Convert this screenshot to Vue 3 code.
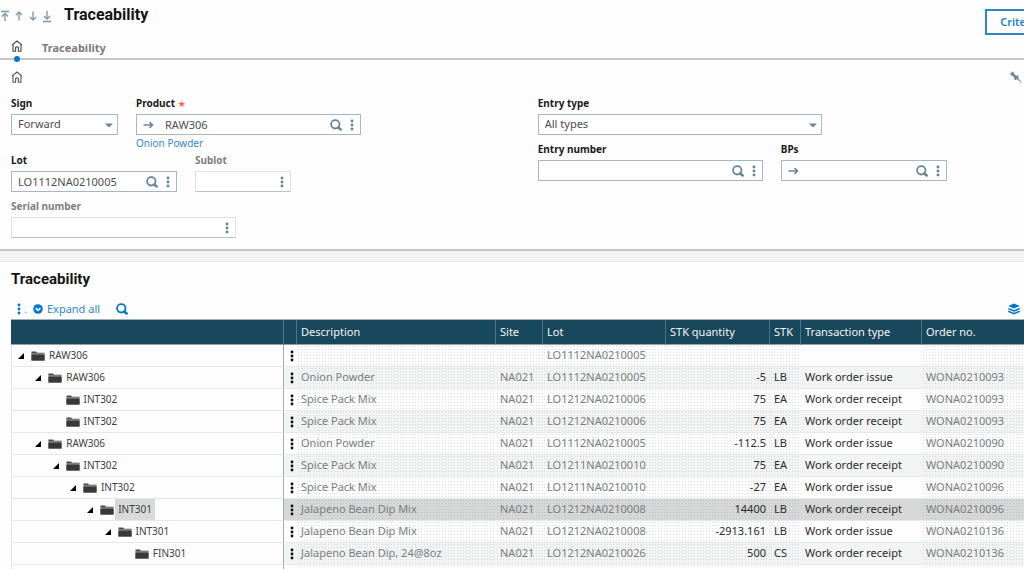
<script setup>
import { ref } from 'vue'

const sign = ref('Forward')
const entryType = ref('All types')
const product = ref('RAW306')
const lot = ref('LO1112NA0210005')

const navPaths = [
  { label: 'First', d: 'M1 1.5h8M5 11V3.5M2 6.5l3-3 3 3' },
  { label: 'Previous', d: 'M5 10.500V2M2 5l3-3 3 3' },
  { label: 'Next', d: 'M5 1.500V10M2 7l3 3 3-3' },
  { label: 'Last', d: 'M1 11.500h8M5 1V9M2 6l3 3 3-3' },
]

const rows = [
  { level: 0, open: true, name: 'RAW306', lot: 'LO1112NA0210005' },
  { level: 1, open: true, name: 'RAW306', desc: 'Onion Powder', site: 'NA021', lot: 'LO1112NA0210005', qty: '-5', unit: 'LB', type: 'Work order issue', order: 'WONA0210093' },
  { level: 2, name: 'INT302', desc: 'Spice Pack Mix', site: 'NA021', lot: 'LO1212NA0210006', qty: '75', unit: 'EA', type: 'Work order receipt', order: 'WONA0210093' },
  { level: 2, name: 'INT302', desc: 'Spice Pack Mix', site: 'NA021', lot: 'LO1212NA0210006', qty: '75', unit: 'EA', type: 'Work order receipt', order: 'WONA0210093' },
  { level: 1, open: true, name: 'RAW306', desc: 'Onion Powder', site: 'NA021', lot: 'LO1112NA0210005', qty: '-112.5', unit: 'LB', type: 'Work order issue', order: 'WONA0210090' },
  { level: 2, open: true, name: 'INT302', desc: 'Spice Pack Mix', site: 'NA021', lot: 'LO1211NA0210010', qty: '75', unit: 'EA', type: 'Work order receipt', order: 'WONA0210090' },
  { level: 3, open: true, name: 'INT302', desc: 'Spice Pack Mix', site: 'NA021', lot: 'LO1211NA0210010', qty: '-27', unit: 'EA', type: 'Work order issue', order: 'WONA0210096' },
  { level: 4, open: true, name: 'INT301', desc: 'Jalapeno Bean Dip Mix', site: 'NA021', lot: 'LO1212NA0210008', qty: '14400', unit: 'LB', type: 'Work order receipt', order: 'WONA0210096', selected: true },
  { level: 5, open: true, name: 'INT301', desc: 'Jalapeno Bean Dip Mix', site: 'NA021', lot: 'LO1212NA0210008', qty: '-2913.161', unit: 'LB', type: 'Work order issue', order: 'WONA0210136' },
  { level: 6, name: 'FIN301', desc: 'Jalapeno Bean Dip, 24@8oz', site: 'NA021', lot: 'LO1212NA0210026', qty: '500', unit: 'CS', type: 'Work order receipt', order: 'WONA0210136' },
  { level: 0, name: '' },
]
</script>

<template>
  <div class="page">
    <svg class="defs" width="0" height="0" aria-hidden="true">
      <symbol id="search" viewBox="0 0 12 12">
        <circle cx="5.300" cy="5.300" r="4.200" fill="none" stroke="currentColor" stroke-width="1.800" />
        <path d="M8.200 8.500l2.500 2" stroke="currentColor" stroke-width="2.400" stroke-linecap="round" />
      </symbol>
      <symbol id="dots" viewBox="0 0 4 12">
        <circle cx="2" cy="2" r="1.450" fill="currentColor" />
        <circle cx="2" cy="6" r="1.450" fill="currentColor" />
        <circle cx="2" cy="10" r="1.450" fill="currentColor" />
      </symbol>
      <symbol id="jump" viewBox="0 0 12 10">
        <path d="M.5 5h9M6.500 2l3 3-3 3" fill="none" stroke="currentColor" stroke-width="1.600" />
      </symbol>
      <symbol id="home" viewBox="0 0 12 12">
        <path d="M1 5.200L6 1l5 4.200M2 4.500V11.300h2.600V7.500Q6 6 7.400 7.500V11.300H10V4.500" fill="none" stroke="currentColor" stroke-width="1.100" stroke-linejoin="round" />
      </symbol>
      <symbol id="folder" viewBox="0 0 14 10">
        <path d="M0.500 0.500h4.500l1 1.200h7.500V9.500H0.500z" fill="#4a4a4a" />
        <path d="M1 2.900h12.500" stroke="#a9a9a9" stroke-width="0.900" />
        <path d="M0.500 4h13v5.500h-13z" fill="#383838" />
      </symbol>
    </svg>

    <header class="top">
      <nav class="record-nav" aria-label="Records">
        <button v-for="n in navPaths" :key="n.label" type="button" :aria-label="n.label">
          <svg width="10" height="13" viewBox="0 0 10 13"><path :d="n.d" fill="none" stroke="currentColor" stroke-width="1.300" /></svg>
        </button>
      </nav>
      <h1>Traceability</h1>
      <button type="button" class="criteria">Crite</button>
    </header>

    <nav class="tabs" aria-label="Sections">
      <a href="#" class="tab-home" aria-label="Home"><svg width="12" height="12"><use href="#home" /></svg></a>
      <a href="#list" class="tab">Traceability</a>
    </nav>

    <section class="panel">
      <div class="panel-tools">
        <a href="#" aria-label="Home" class="home"><svg width="12" height="12"><use href="#home" /></svg></a>
        <button type="button" class="pin" aria-label="Pin">
          <svg width="13" height="12" viewBox="0 0 13 12"><path d="M1 3L3.600.6 5 1.900 4.900 2.800 7.400 4.700 9.400 4.400 9.700 6 9 6.900 12.500 11.300 12 11.600 7.800 8 7 8.900 5.400 8.700 5.300 6.800 3.200 4.600 2.200 4.500z" fill="currentColor" /></svg>
        </button>
      </div>

      <div class="form">
        <div class="column">
          <div class="line">
            <div class="field w-sign">
              <label for="sign">Sign</label>
              <div class="box">
                <select id="sign" v-model="sign"><option>Forward</option></select>
                <svg class="caret" width="8" height="5" viewBox="0 0 8 5"><path d="M0 .5h8L4 4.500z" fill="currentColor" /></svg>
              </div>
            </div>
            <div class="field w-long">
              <label for="product">Product <span class="star">★</span></label>
              <div class="box">
                <button type="button" class="jump" aria-label="Open product"><svg width="12" height="10"><use href="#jump" /></svg></button>
                <input id="product" v-model="product" type="text" />
                <button type="button" aria-label="Search product"><svg width="12" height="12"><use href="#search" /></svg></button>
                <button type="button" class="more" aria-label="Product actions"><svg width="4" height="12"><use href="#dots" /></svg></button>
              </div>
              <a href="#product" class="hint">Onion Powder</a>
            </div>
          </div>
          <div class="line">
            <div class="field w-mid">
              <label for="lot">Lot</label>
              <div class="box">
                <input id="lot" v-model="lot" type="text" />
                <button type="button" aria-label="Search lot"><svg width="12" height="12"><use href="#search" /></svg></button>
                <button type="button" class="more" aria-label="Lot actions"><svg width="4" height="12"><use href="#dots" /></svg></button>
              </div>
            </div>
            <div class="field w-short off">
              <label for="sublot">Sublot</label>
              <div class="box">
                <input id="sublot" type="text" readonly />
                <button type="button" class="more" aria-label="Sublot actions"><svg width="4" height="12"><use href="#dots" /></svg></button>
              </div>
            </div>
          </div>
          <div class="line">
            <div class="field w-long off">
              <label for="serial">Serial number</label>
              <div class="box">
                <input id="serial" type="text" readonly />
                <button type="button" class="more" aria-label="Serial number actions"><svg width="4" height="12"><use href="#dots" /></svg></button>
              </div>
            </div>
          </div>
        </div>

        <div class="column">
          <div class="line">
            <div class="field w-wide">
              <label for="entry-type">Entry type</label>
              <div class="box">
                <select id="entry-type" v-model="entryType"><option>All types</option></select>
                <svg class="caret" width="8" height="5" viewBox="0 0 8 5"><path d="M0 .5h8L4 4.500z" fill="currentColor" /></svg>
              </div>
            </div>
          </div>
          <div class="line">
            <div class="field w-long">
              <label for="entry-number">Entry number</label>
              <div class="box">
                <input id="entry-number" type="text" />
                <button type="button" aria-label="Search entry number"><svg width="12" height="12"><use href="#search" /></svg></button>
                <button type="button" class="more" aria-label="Entry number actions"><svg width="4" height="12"><use href="#dots" /></svg></button>
              </div>
            </div>
            <div class="field w-mid">
              <label for="bps">BPs</label>
              <div class="box">
                <button type="button" class="jump" aria-label="Open BP"><svg width="12" height="10"><use href="#jump" /></svg></button>
                <input id="bps" type="text" />
                <button type="button" aria-label="Search BP"><svg width="12" height="12"><use href="#search" /></svg></button>
                <button type="button" class="more" aria-label="BP actions"><svg width="4" height="12"><use href="#dots" /></svg></button>
              </div>
            </div>
          </div>
        </div>
      </div>
    </section>

    <section id="list" class="list">
      <h2>Traceability</h2>
      <div class="list-tools">
        <button type="button" aria-label="List actions"><svg width="4" height="12"><use href="#dots" /></svg></button>
        <span class="stop">.</span>
        <button type="button" class="expand">
          <svg width="10" height="10" viewBox="0 0 10 10"><circle cx="5" cy="5" r="4.800" fill="#0077c8" /><path d="M2.600 4L5 6.400 7.400 4" fill="none" stroke="#fff" stroke-width="1.600" /></svg>
          Expand all
        </button>
        <button type="button" class="find" aria-label="Search list"><svg width="12" height="12"><use href="#search" /></svg></button>
        <button type="button" class="layers" aria-label="Layers">
          <svg width="12" height="12" viewBox="0 0 12 12"><path d="M6 .5L11.800 3 6 5.600.2 3z" fill="currentColor" /><path d="M.3 5.600L6 8l5.700-2.400M.3 8.200L6 10.600 11.700 8.200" fill="none" stroke="currentColor" stroke-width="1.500" /></svg>
        </button>
      </div>

      <table>
        <colgroup>
          <col class="c-tree" /><col class="c-menu" /><col class="c-desc" /><col class="c-site" /><col class="c-lot" />
          <col class="c-qty" /><col class="c-unit" /><col class="c-type" /><col />
        </colgroup>
        <thead>
          <tr>
            <th aria-label="Item"></th>
            <th aria-label="Actions"></th>
            <th>Description</th>
            <th>Site</th>
            <th>Lot</th>
            <th>STK quantity</th>
            <th>STK</th>
            <th>Transaction type</th>
            <th>Order no.</th>
          </tr>
        </thead>
        <tbody>
          <tr v-for="(r, i) in rows" :key="i" :class="{ alt: i % 2 === 1, selected: r.selected }">
            <td class="tree">
              <div v-if="r.name" class="node" :style="{ paddingLeft: r.level * 173 / 10 + 'px' }">
                <span class="toggle"><svg v-if="r.open" width="6" height="6" viewBox="0 0 6 6"><path d="M6 0V6H0z" fill="#000" /></svg></span>
                <svg width="14" height="10"><use href="#folder" /></svg>
                <span class="name">{{ r.name }}</span>
              </div>
            </td>
            <td class="menu"><button type="button" aria-label="Row actions"><svg width="4" height="12"><use href="#dots" /></svg></button></td>
            <td class="mesh soft">{{ r.desc }}</td>
            <td class="mesh soft">{{ r.site }}</td>
            <td class="mesh soft">{{ r.lot }}</td>
            <td class="mesh num">{{ r.qty }}</td>
            <td class="mesh">{{ r.unit }}</td>
            <td>{{ r.type }}</td>
            <td class="mesh soft">{{ r.order }}</td>
          </tr>
        </tbody>
      </table>
    </section>
  </div>
</template>

<style>
body {
  background: #f2f4f4;
}
</style>

<style scoped>
.page {
  height: 100vh;
  overflow: hidden;
  display: flex;
  flex-direction: column;
  background: #f2f4f4;
  color: #1c1c1c;
  font: 11px/16px "Noto Sans", sans-serif;
}
.defs {
  position: absolute;
}
button {
  display: flex;
  align-items: center;
  padding: 0;
  border: 0;
  background: none;
  font: inherit;
  color: inherit;
}
a {
  text-decoration: none;
  color: inherit;
}
h1,
h2 {
  margin: 0;
  font-family: Roboto, sans-serif;
  font-weight: 700;
  color: #151515;
}
.top {
  flex: none;
  display: flex;
  align-items: flex-start;
  height: 37px;
  background: #fdfdfd;
}
.record-nav {
  display: flex;
  gap: 4px;
  padding-top: 10px;
  color: #7b98a8;
}
h1 {
  margin-left: 12px;
  font-size: 16px;
  line-height: 30px;
}
.criteria {
  box-sizing: border-box;
  flex: none;
  height: 26px;
  margin: 9px -24px 0 auto;
  padding: 0 20px 0 13px;
  border: 2px solid #2b87cc;
  color: #2480c8;
  font-weight: 600;
}
.tabs {
  flex: none;
  display: flex;
  height: 21px;
  padding-left: 11px;
  border-bottom: 2px solid #c5c8c8;
  background: #fdfdfd;
}
.tab-home {
  position: relative;
  color: #444;
  line-height: 0;
  padding-top: 3px;
}
.tab-home::after {
  content: "";
  position: absolute;
  left: 3px;
  top: 19px;
  width: 6px;
  height: 6px;
  border-radius: 50%;
  background: #0077c8;
}
.tab {
  margin-left: 19px;
  line-height: 21px;
  font-weight: 700;
  color: #7b7b7b;
}
.panel {
  flex: none;
  padding: 0 0 11px 11px;
  border-bottom: 2px solid #c3c8ca;
  background: #fdfdfd;
}
.panel-tools {
  display: flex;
  justify-content: space-between;
  height: 36px;
  padding: 11px 2px 0 0;
  box-sizing: border-box;
}
.home {
  color: #555;
  line-height: 0;
}
.pin {
  height: 12px;
  color: #6e8796;
}
.form {
  display: grid;
  grid-template-columns: 52fr 48fr;
}
.column {
  display: flex;
  flex-direction: column;
  gap: 7px;
}
.line {
  display: flex;
  align-items: flex-start;
  gap: 18px;
}
.field {
  display: flex;
  flex-direction: column;
}
.w-sign { width: 107px; }
.w-short { width: 96px; }
.w-mid { width: 166px; }
.w-long { width: 225px; }
.w-wide { width: 284px; }
label {
  margin-bottom: 3px;
  font-size: 10px;
  line-height: 15px;
  font-weight: 700;
  color: #1a1a1a;
}
.star {
  color: #ee6f2d;
  font: 9px/9px "DejaVu Sans", sans-serif;
}
.box {
  position: relative;
  box-sizing: border-box;
  display: flex;
  align-items: center;
  height: 21px;
  padding-right: 6px;
  border: 1px solid #a3b8c4;
  background: #fff;
  color: #668496;
}
.off label {
  color: #7e7e7e;
}
.off .box {
  border-color: #d9e2e7;
  border-bottom-color: #b7c2c9;
}
.box .jump {
  margin-left: 6px;
}
.box .jump + input {
  padding-left: 10px;
}
.box .more {
  margin-left: 8px;
}
input,
select {
  box-sizing: border-box;
  flex: 1;
  min-width: 0;
  width: 100%;
  height: 19px;
  margin: 0;
  padding: 0 0 1px 6px;
  border: 0;
  outline: 0;
  appearance: none;
  background: transparent;
  font: inherit;
  color: #4d4d4d;
}
.caret {
  position: absolute;
  right: 4px;
  top: 8px;
  pointer-events: none;
}
.hint {
  margin-bottom: -5px;
  font-size: 10px;
  color: #3a8ac6;
}
.list {
  flex: 1;
  min-height: 0;
  margin-top: 10px;
  padding-left: 11px;
  border-top: 1px solid #e6e9e9;
  background: #fdfdfd;
}
h2 {
  padding-top: 8px;
  font-size: 15px;
  line-height: 18px;
}
.list-tools {
  display: flex;
  align-items: center;
  height: 20px;
  margin-top: 11px;
  padding: 0 4px 0 6px;
  color: #0077c8;
}
.stop {
  margin: 0 6px 0 3px;
  color: #6a9ac0;
}
.expand {
  gap: 4px;
  color: #3087c9;
}
.find {
  margin-left: 16px;
}
.layers {
  margin-left: auto;
}
table {
  width: 100%;
  table-layout: fixed;
  border-collapse: separate;
  border-spacing: 0;
  border-top: 1px solid #9fb0b8;
}
.c-tree { width: 273px; }
.c-menu { width: 13px; }
.c-desc { width: 199px; }
.c-site { width: 47px; }
.c-lot { width: 123px; }
.c-qty { width: 104px; }
.c-unit { width: 31px; }
.c-type { width: 121px; }
th {
  box-sizing: border-box;
  height: 25px;
  padding: 0 0 1px 4px;
  border-right: 1px solid #4f7485;
  border-bottom: 1px solid #8fa1a9;
  background: #19475b;
  color: #f2f6f8;
  font-weight: 400;
  text-align: left;
  white-space: nowrap;
}
th:last-child {
  border-right: 0;
}
td {
  box-sizing: border-box;
  height: 22px;
  padding: 0 4px 2px;
  border-bottom: 1px solid #e4e9ec;
  background-color: #fdfdfd;
  color: #2b2b2b;
  white-space: nowrap;
}
.alt td {
  background-color: #f2f4f4;
}
.selected td {
  background-color: #d6d8d8;
}
td.tree {
  padding: 0;
  border-left: 1px solid #dfe6ea;
  border-right: 1px solid #a5acb0;
  background: #fdfdfd;
}
td.menu {
  padding: 0 0 0 6px;
  color: #111;
}
td.soft {
  color: #7b7d7e;
}
td.num {
  text-align: right;
}
td.mesh {
  background-image: radial-gradient(circle, rgba(110, 130, 140, 0.24) 0, rgba(110, 130, 140, 0) 1px);
  background-size: 3px 3px;
}
.node {
  display: flex;
  align-items: center;
  height: 21px;
}
.toggle {
  display: flex;
  width: 13px;
  margin-left: 6px;
}
.name {
  margin-left: 1px;
  padding: 0 3px;
  font-size: 10px;
  line-height: 21px;
  color: #3d3d3d;
}
.selected .name {
  background: #d8dada;
}
</style>
